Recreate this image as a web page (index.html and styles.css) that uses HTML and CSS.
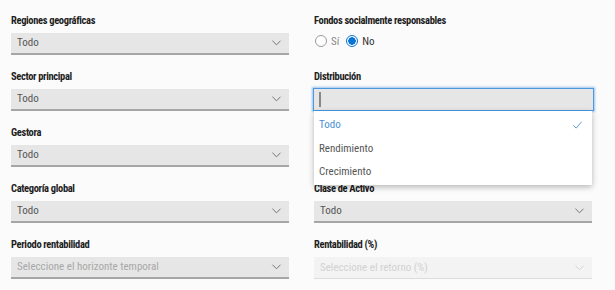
FILE: index.html
```html
<!DOCTYPE html>
<html lang="es">
<head>
<meta charset="utf-8">
<title>Filtros</title>
<link rel="stylesheet" href="styles.css">
</head>
<body>
<form class="filters">
  <div class="field">
    <label class="label">Regiones geográficas</label>
    <div class="select"><span class="value">Todo</span><svg class="chev" viewBox="0 0 10 6"><path d="M0.5 0.5 L5 5 L9.5 0.5"/></svg></div>
  </div>
  <div class="field">
    <label class="label">Fondos socialmente responsables</label>
    <div class="radios">
      <span class="radio"><span class="dot"></span>Sí</span>
      <span class="radio checked"><span class="dot"></span>No</span>
    </div>
  </div>

  <div class="field">
    <label class="label">Sector principal</label>
    <div class="select"><span class="value">Todo</span><svg class="chev" viewBox="0 0 10 6"><path d="M0.5 0.5 L5 5 L9.5 0.5"/></svg></div>
  </div>
  <div class="field open">
    <label class="label">Distribución</label>
    <div class="select focused"><span class="caret"></span></div>
    <ul class="menu">
      <li class="opt selected">Todo<svg class="check" viewBox="0 0 10 8"><path d="M0.5 4.5 L3.5 7.5 L9.5 0.5"/></svg></li>
      <li class="opt">Rendimiento</li>
      <li class="opt">Crecimiento</li>
    </ul>
  </div>

  <div class="field">
    <label class="label">Gestora</label>
    <div class="select"><span class="value">Todo</span><svg class="chev" viewBox="0 0 10 6"><path d="M0.5 0.5 L5 5 L9.5 0.5"/></svg></div>
  </div>
  <div class="field"></div>

  <div class="field">
    <label class="label">Categoría global</label>
    <div class="select"><span class="value">Todo</span><svg class="chev" viewBox="0 0 10 6"><path d="M0.5 0.5 L5 5 L9.5 0.5"/></svg></div>
  </div>
  <div class="field">
    <label class="label">Clase de Activo</label>
    <div class="select"><span class="value">Todo</span><svg class="chev" viewBox="0 0 10 6"><path d="M0.5 0.5 L5 5 L9.5 0.5"/></svg></div>
  </div>

  <div class="field">
    <label class="label">Periodo rentabilidad</label>
    <div class="select"><span class="value placeholder">Seleccione el horizonte temporal</span><svg class="chev" viewBox="0 0 10 6"><path d="M0.5 0.5 L5 5 L9.5 0.5"/></svg></div>
  </div>
  <div class="field">
    <label class="label">Rentabilidad (%)</label>
    <div class="select disabled"><span class="value">Seleccione el retorno (%)</span><svg class="chev" viewBox="0 0 10 6"><path d="M0.5 0.5 L5 5 L9.5 0.5"/></svg></div>
  </div>
</form>
</body>
</html>
```
FILE: styles.css
```css
html, body {
  margin: 0;
  padding: 0;
  background: #fbfbfb;
}
body {
  font-family: "Roboto", "Roboto Condensed", "DejaVu Sans Condensed", sans-serif;
  font-stretch: 75%;
  color: #333;
}
.filters {
  display: grid;
  grid-template-columns: 278px 278px;
  column-gap: 25px;
  padding: 12px 0 0 11px;
  margin: 0;
}
.field {
  position: relative;
  height: 56px;
}
.label {
  display: block;
  font-size: 10.5px;
  font-weight: bold;
  line-height: 17px;
  height: 16px;
  color: #1e1e1e;
  margin-bottom: 5px;
  letter-spacing: -0.35px;
}
.select {
  box-sizing: border-box;
  height: 22px;
  background: #e6e6e6;
  border-bottom: 2px solid #a6a6a6;
  display: flex;
  align-items: center;
  justify-content: space-between;
  padding: 0 8px 0 6px;
}
.value {
  font-size: 11px;
  color: #555;
  line-height: 20px;
}
.value.placeholder { color: #a8a8a8; }
.select.disabled {
  background: #f3f3f3;
  border-bottom: 1px solid #dcdcdc;
}
.select.disabled .value { color: #d2d2d2; }
.select.disabled .chev path { stroke: #d0d0d0; }
.chev {
  width: 9px;
  height: 6px;
  overflow: visible;
}
.chev path {
  fill: none;
  stroke: #666;
  stroke-width: 1;
}
.radios {
  display: flex;
  align-items: center;
  height: 16px;
  gap: 6px;
  font-size: 11px;
  color: #888;
}
.radio {
  display: inline-flex;
  align-items: center;
  gap: 4px;
}
.radio .dot {
  box-sizing: border-box;
  width: 12px;
  height: 12px;
  border-radius: 50%;
  border: 1px solid #9a9a9a;
  background: #fff;
  margin-left: 1px;
}
.radio.checked { color: #333; }
.radio.checked .dot {
  border: 1px solid #0a74d6;
  background: radial-gradient(circle, #0a74d6 0 3.5px, #fff 4px);
}
.select.focused {
  margin: -1px -2px 0 -1px;
  height: 23px;
  border: 1px solid #4a98e0;
  box-shadow: 0 0 2px 1px rgba(80, 150, 225, 0.55);
  justify-content: flex-start;
  padding-left: 5px;
}
.caret {
  width: 2px;
  height: 15px;
  background: #888;
}
.menu {
  position: absolute;
  z-index: 2;
  left: 0;
  right: 0;
  top: 43px;
  margin: 0;
  padding: 2px 0 1px;
  list-style: none;
  background: #fff;
  box-shadow: 0 2px 6px rgba(0, 0, 0, 0.28);
}
.opt {
  display: flex;
  justify-content: space-between;
  align-items: center;
  height: 23.5px;
  padding: 0 10px 0 5px;
  font-size: 11px;
  color: #555;
}
.opt.selected { color: #4a8fd6; }
.check {
  width: 9px;
  height: 8px;
  overflow: visible;
}
.check path {
  fill: none;
  stroke: #4a8fd6;
  stroke-width: 1;
}
```
